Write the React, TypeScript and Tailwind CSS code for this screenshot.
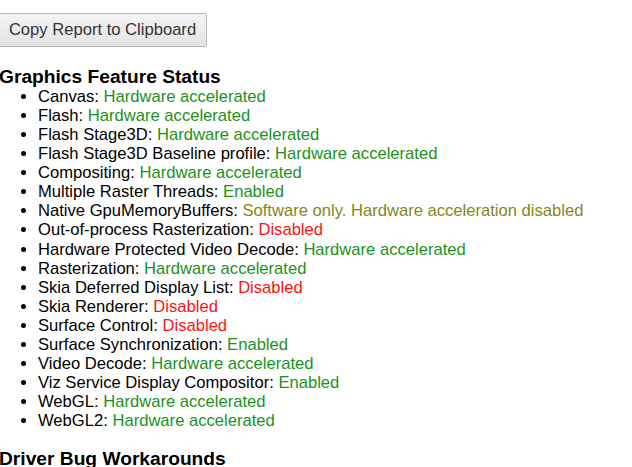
const features: [string, string, 'green' | 'yellow' | 'red'][] = [
  ['Canvas', 'Hardware accelerated', 'green'],
  ['Flash', 'Hardware accelerated', 'green'],
  ['Flash Stage3D', 'Hardware accelerated', 'green'],
  ['Flash Stage3D Baseline profile', 'Hardware accelerated', 'green'],
  ['Compositing', 'Hardware accelerated', 'green'],
  ['Multiple Raster Threads', 'Enabled', 'green'],
  ['Native GpuMemoryBuffers', 'Software only. Hardware acceleration disabled', 'yellow'],
  ['Out-of-process Rasterization', 'Disabled', 'red'],
  ['Hardware Protected Video Decode', 'Hardware accelerated', 'green'],
  ['Rasterization', 'Hardware accelerated', 'green'],
  ['Skia Deferred Display List', 'Disabled', 'red'],
  ['Skia Renderer', 'Disabled', 'red'],
  ['Surface Control', 'Disabled', 'red'],
  ['Surface Synchronization', 'Enabled', 'green'],
  ['Video Decode', 'Hardware accelerated', 'green'],
  ['Viz Service Display Compositor', 'Enabled', 'green'],
  ['WebGL', 'Hardware accelerated', 'green'],
  ['WebGL2', 'Hardware accelerated', 'green'],
];

const statusClass = (s: string) => {
  switch (s) {
    case 'green':
      return 'text-[#1a931a]';
    case 'yellow':
      return 'text-[#868618]';
    default:
      return 'text-[#ff1111]';
  }
};

export default function App() {
  return (
    <div className="h-[467px] overflow-hidden bg-white text-black font-['Liberation_Sans',Arial,sans-serif] text-[16.6px]">
      <div className="-ml-[2px] pt-[13px]">
        <button className="h-[34px] w-[209px] rounded-[2px] border border-[#b5b5b5] bg-gradient-to-b from-[#f4f4f4] to-[#e4e4e4] text-[16.6px] text-[#333]">
          Copy Report to Clipboard
        </button>
      </div>

      {/* Feature status */}
      <h3 className="-ml-[1px] mt-[19px] text-[19.2px] font-bold leading-[21px]">Graphics Feature Status</h3>
      <ul className="list-disc pl-[38px] leading-[19.06px]">
        {features.map(([name, status, color]) => (
          <li key={name}>
            {name}: <span className={statusClass(color)}>{status}</span>
          </li>
        ))}
      </ul>

      <h3 className="-ml-[1px] mt-[18px] text-[19.2px] font-bold leading-[21px]">Driver Bug Workarounds</h3>
    </div>
  );
}
